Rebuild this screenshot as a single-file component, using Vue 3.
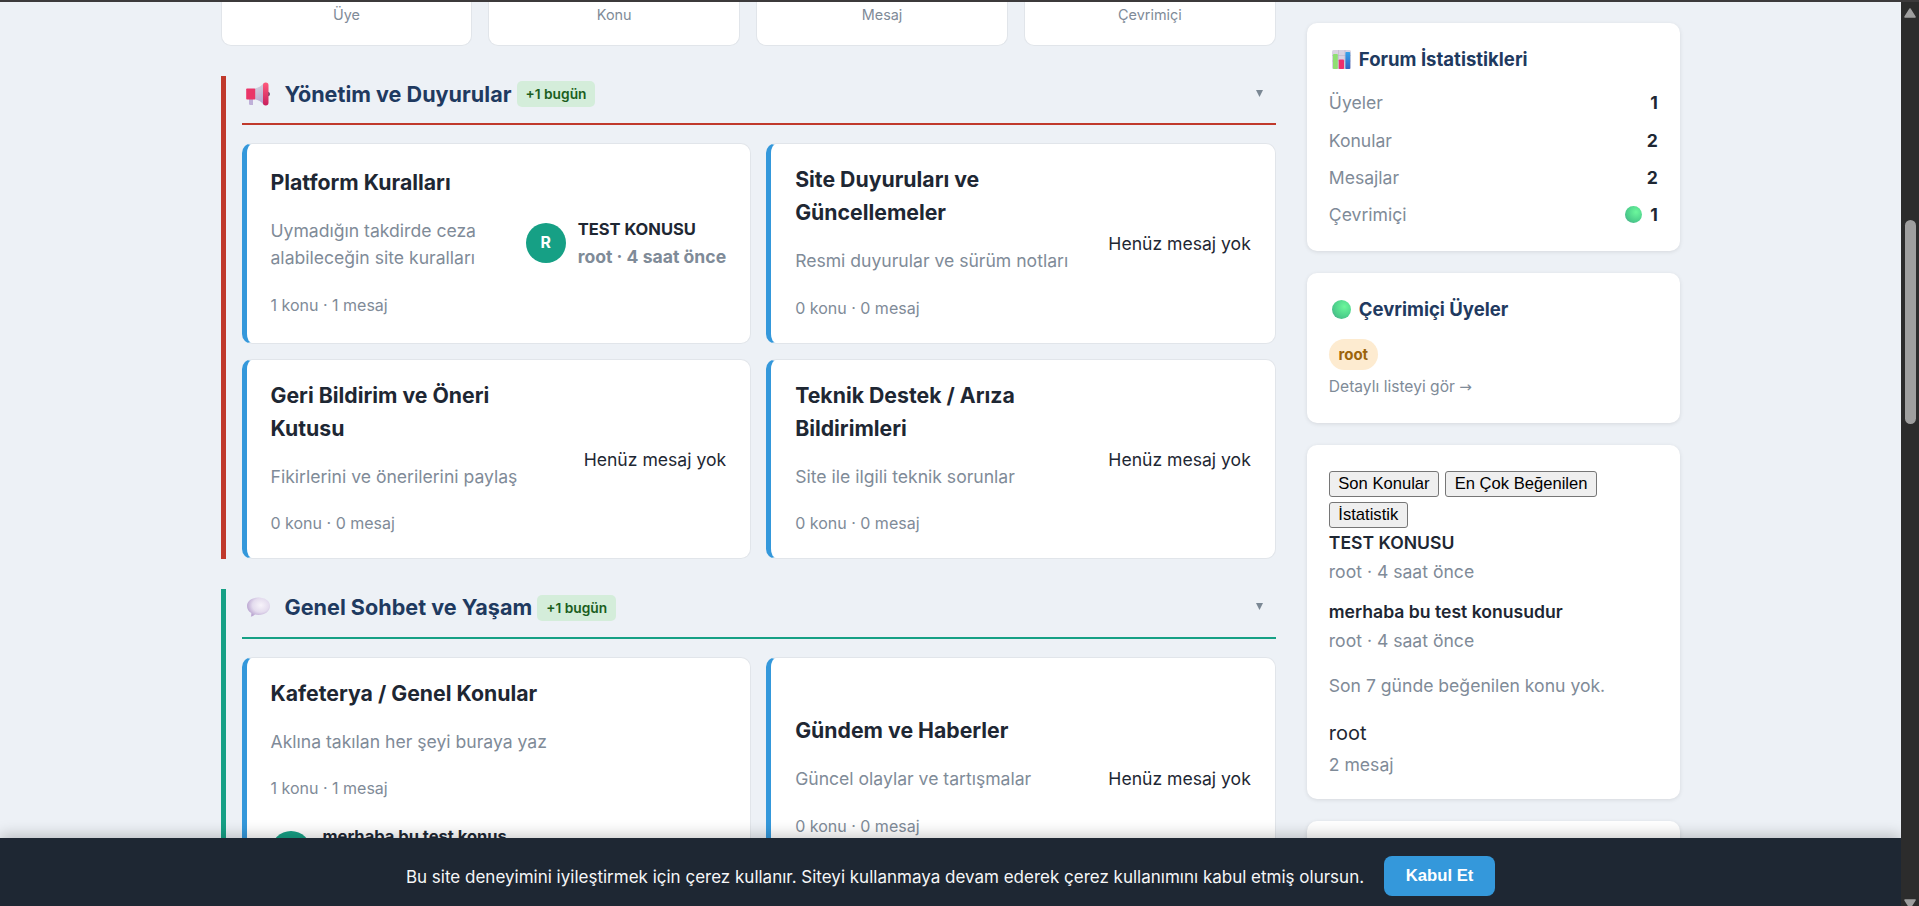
<template>
  <div class="viewport">
    <div class="page">
      <main class="main">
        <div class="stats">
          <div v-for="label in statLabels" :key="label" class="stat-box">{{ label }}</div>
        </div>

        <section v-for="category in categories" :key="category.title" class="category" :class="category.theme">
          <header class="category-header">
            <svg v-if="category.icon === 'megaphone'" class="category-icon" viewBox="0 0 24 24">
              <defs>
                <linearGradient id="horn" x1="0" y1="0" x2="0.3" y2="1">
                  <stop offset="0" stop-color="#d8dade" />
                  <stop offset="1" stop-color="#b9a8d2" />
                </linearGradient>
                <linearGradient id="rim" x1="0" y1="0" x2="0" y2="1">
                  <stop offset="0" stop-color="#ff5a7c" />
                  <stop offset="1" stop-color="#c81f5c" />
                </linearGradient>
              </defs>
              <path d="M3 16h4v7H4.200q-1.200 0-1.200-1.200z" fill="#bfb0d8" />
              <path d="M8.500 6.500Q14 5.500 18 1v22q-4-5-9.500-5.800z" fill="url(#horn)" />
              <path d="M21.500 9.500q2.500.5 2.500 2.500t-2.500 2.500z" fill="#5d4a66" />
              <rect x="0.200" y="6.500" width="9" height="11" rx="0.800" fill="#ea3568" />
              <rect x="17" y="0.500" width="5.500" height="23" rx="2.700" fill="url(#rim)" />
            </svg>
            <svg v-else class="category-icon" viewBox="0 0 24 24">
              <defs>
                <radialGradient id="bubble" cx="0.600" cy="0.400" r="0.600">
                  <stop offset="0" stop-color="#f7f3fa" />
                  <stop offset="0.600" stop-color="#e4dcee" />
                  <stop offset="1" stop-color="#bda9d3" />
                </radialGradient>
              </defs>
              <path
                d="M12.500 1.500C19 1.500 24 5 24 10s-5 9-11.500 9q-2 0-3.500-.4-2 1.900-4.200 2.200Q5.400 19.500 5.300 17 1 14.500 1 10c0-5 5-8.500 11.500-8.500z"
                fill="url(#bubble)"
              />
            </svg>
            <h2>{{ category.title }}</h2>
            <span class="today">+1 bugün</span>
            <svg class="toggle" viewBox="0 0 7 7"><path d="M0 0h7L3.500 7z" fill="#7b8894" /></svg>
          </header>

          <div class="forums">
            <article v-for="forum in category.forums" :key="forum.title" class="forum" :class="{ stacked: forum.stacked }">
              <div class="forum-info">
                <h3>{{ forum.title }}</h3>
                <p>{{ forum.description }}</p>
                <div class="forum-counts">{{ forum.count }} konu · {{ forum.count }} mesaj</div>
              </div>
              <div v-if="forum.last" class="last-post">
                <span class="avatar">{{ forum.initial }}</span>
                <div class="last-text">
                  <div class="last-title">{{ forum.last }}</div>
                  <div v-if="forum.meta" class="last-meta">{{ forum.meta }}</div>
                </div>
              </div>
              <div v-else class="no-post">Henüz mesaj yok</div>
            </article>
          </div>
        </section>
      </main>

      <aside class="sidebar">
        <div class="widget">
          <h4>
            <svg class="widget-icon" viewBox="0 0 19 19">
              <defs>
                <linearGradient id="barBlue" x1="0" y1="0" x2="0" y2="1">
                  <stop offset="0" stop-color="#35a3ea" />
                  <stop offset="1" stop-color="#3464c4" />
                </linearGradient>
              </defs>
              <rect width="19" height="19" rx="1.500" fill="#d9d3e2" />
              <path d="M0 5.500h19M0 11h19M6.500 0v19M13 0v19" stroke="#bcb3ca" stroke-width="0.600" />
              <rect x="1" y="4" width="4.800" height="15" rx="0.800" fill="#8fdf72" />
              <rect x="6.800" y="9.500" width="5.200" height="9.500" rx="0.800" fill="#ee2f6d" />
              <rect x="13.400" y="2" width="4.800" height="17" rx="0.800" fill="url(#barBlue)" />
            </svg>
            Forum İstatistikleri
          </h4>
          <div v-for="row in totals" :key="row.label" class="total-row">
            <span>{{ row.label }}</span>
            <strong><i v-if="row.online" class="dot"></i>{{ row.value }}</strong>
          </div>
        </div>

        <div class="widget online">
          <h4><i class="dot widget-icon"></i>Çevrimiçi Üyeler</h4>
          <span class="member">root</span>
          <a class="more">Detaylı listeyi gör <span>→</span></a>
        </div>

        <div class="widget activity">
          <div class="tabs">
            <button type="button">Son Konular</button>
            <button type="button">En Çok Beğenilen</button>
            <button type="button">İstatistik</button>
          </div>
          <div v-for="topic in recentTopics" :key="topic" class="topic">
            <div class="topic-title">{{ topic }}</div>
            <div class="topic-meta">root · 4 saat önce</div>
          </div>
          <p class="empty">Son 7 günde beğenilen konu yok.</p>
          <div class="top-user">root</div>
          <div class="top-count">2 mesaj</div>
        </div>

        <div class="widget next"></div>
      </aside>
    </div>

    <div class="cookie-bar">
      <span>Bu site deneyimini iyileştirmek için çerez kullanır. Siteyi kullanmaya devam ederek çerez kullanımını kabul etmiş olursun.</span>
      <button type="button">Kabul Et</button>
    </div>

    <div class="scrollbar">
      <svg class="arrow-up" viewBox="0 0 12 10"><path d="M6 1 11 9H1z" fill="#9f9f9f" stroke="#9f9f9f" stroke-linejoin="round" stroke-width="1.500" /></svg>
      <div class="thumb"></div>
      <svg class="arrow-down" viewBox="0 0 12 10"><path d="M6 9 11 1H1z" fill="#9f9f9f" stroke="#9f9f9f" stroke-linejoin="round" stroke-width="1.500" /></svg>
    </div>
    <div class="top-edge"></div>
  </div>
</template>

<script setup>
import { ref } from 'vue';

const statLabels = ['Üye', 'Konu', 'Mesaj', 'Çevrimiçi'];

const categories = ref([
  {
    title: 'Yönetim ve Duyurular',
    icon: 'megaphone',
    theme: 'red',
    forums: [
      {
        title: 'Platform Kuralları',
        description: 'Uymadığın takdirde ceza alabileceğin site kuralları',
        count: 1,
        initial: 'R',
        last: 'TEST KONUSU',
        meta: 'root · 4 saat önce',
      },
      { title: 'Site Duyuruları ve Güncellemeler', description: 'Resmi duyurular ve sürüm notları', count: 0 },
      { title: 'Geri Bildirim ve Öneri Kutusu', description: 'Fikirlerini ve önerilerini paylaş', count: 0 },
      { title: 'Teknik Destek / Arıza Bildirimleri', description: 'Site ile ilgili teknik sorunlar', count: 0 },
    ],
  },
  {
    title: 'Genel Sohbet ve Yaşam',
    icon: 'bubble',
    theme: 'green',
    forums: [
      { title: 'Kafeterya / Genel Konular', description: 'Aklına takılan her şeyi buraya yaz', count: 1, last: 'merhaba bu test konus', stacked: true },
      { title: 'Gündem ve Haberler', description: 'Güncel olaylar ve tartışmalar', count: 0 },
    ],
  },
]);

const totals = [
  { label: 'Üyeler', value: 1 },
  { label: 'Konular', value: 2 },
  { label: 'Mesajlar', value: 2 },
  { label: 'Çevrimiçi', value: 1, online: true },
];

const recentTopics = ['TEST KONUSU', 'merhaba bu test konusudur'];
</script>

<style>
body {
  margin: 0;
  overflow: hidden;
}
</style>

<style scoped>
.viewport {
  position: relative;
  height: 906px;
  overflow: hidden;
  box-sizing: border-box;
  padding-right: 18px;
  background: #edf1f6;
  color: #1e2733;
  font-family: Inter, 'Liberation Sans', sans-serif;
  font-size: 17.58px;
  line-height: 27.1px;
}

.page {
  display: grid;
  grid-template-columns: 1055.3px 373px;
  gap: 31px;
  width: 1460px;
  margin: 0 auto;
}

.stats {
  display: grid;
  grid-template-columns: repeat(4, 1fr);
  gap: 16px;
  height: 45.7px;
}

.stat-box {
  padding-top: 3.5px;
  box-sizing: border-box;
  border: 1px solid #e1e5ea;
  border-top: none;
  border-radius: 0 0 10px 10px;
  background: #fff;
  color: #7f8b98;
  font-size: 14.4px;
  line-height: 22.3px;
  text-align: center;
}

.category {
  margin-top: 30px;
  padding-left: 16px;
  border-left: 5px solid;
}

.red,
.red .category-header {
  border-color: #c0392b;
}

.green,
.green .category-header {
  border-color: #16a085;
}

.category-header {
  display: flex;
  align-items: center;
  box-sizing: border-box;
  height: 49.4px;
  padding: 1px 13px 11px 4px;
  border-bottom: 2px solid;
}

.category-icon {
  width: 24px;
  height: 24px;
  margin-right: 15px;
}

h2 {
  margin: 0;
  color: #1f3a60;
  font-size: 21.6px;
  font-weight: 700;
  line-height: 33px;
}

.today {
  margin-left: 5px;
  padding: 2px 9px;
  border-radius: 5px;
  background: #d4edda;
  color: #1b5e20;
  font-size: 13.75px;
  font-weight: 600;
  line-height: 22px;
}

.toggle {
  width: 7px;
  height: 7px;
  margin: 0 0 2px auto;
}

.forums {
  display: grid;
  grid-template-columns: 1fr 1fr;
  gap: 15.5px 15px;
  margin-top: 18.3px;
}

.forum {
  display: flex;
  align-items: center;
  gap: 24px;
  box-sizing: border-box;
  min-height: 200.2px;
  padding: 18.6px 24px;
  border: 1px solid #e1e5ea;
  border-left: 5px solid #3498db;
  border-radius: 10px;
  background: #fff;
}

.forum-info {
  flex: 1;
  min-width: 0;
}

h3 {
  margin: 0;
  font-size: 21.25px;
  font-weight: 700;
  line-height: 32.8px;
}

.forum p {
  margin: 18.3px 0 17.9px;
  color: #7f8b98;
}

.forum-counts {
  padding: 3.6px 0;
  color: #7f8b98;
  font-size: 16px;
  line-height: 24.8px;
}

.last-post {
  display: flex;
  align-items: center;
  gap: 12px;
}

.avatar {
  width: 40px;
  height: 40px;
  border-radius: 50%;
  background: #16a085;
  color: #fff;
  font-size: 15.8px;
  font-weight: 700;
  line-height: 40px;
  text-align: center;
}

.last-text {
  min-height: 55px;
}

.last-title,
.last-meta {
  font-size: 16.5px;
  font-weight: 700;
  line-height: 27.5px;
  white-space: nowrap;
}

.last-meta {
  color: #7f8b98;
  font-size: 17.6px;
}

.stacked {
  flex-direction: column;
  align-items: flex-start;
  gap: 18.5px;
  padding-bottom: 20.5px;
}

.stacked .forum-info {
  flex: none;
}

.widget {
  box-sizing: border-box;
  margin-bottom: 22px;
  padding: 22px;
  border-radius: 10px;
  background: #fff;
  box-shadow: 0 1px 4px rgba(0, 0, 0, 0.1);
}

.widget:first-child {
  height: 228.3px;
  margin-top: 22.7px;
}

h4 {
  display: flex;
  align-items: center;
  margin: 0 0 15.8px;
  color: #1f3a60;
  font-size: 18.55px;
  font-weight: 700;
  line-height: 29px;
}

.widget-icon {
  width: 19px;
  height: 19px;
  margin: 0 8px 0 3px;
}

.total-row {
  display: flex;
  justify-content: space-between;
  margin-bottom: 10.2px;
  color: #7f8b98;
}

.total-row strong {
  display: flex;
  align-items: center;
  gap: 8px;
  color: #1e2733;
  font-weight: 700;
}

.dot {
  width: 17px;
  height: 17px;
  border-radius: 50%;
  background: radial-gradient(circle at 65% 35%, #6cf79c, #4cce8b 60%, #4a9c8c);
}

h4 .dot {
  width: 19px;
  height: 19px;
}

.online {
  height: 150.3px;
}

.online h4 {
  margin-bottom: 15px;
}

.member {
  display: block;
  width: 49px;
  border-radius: 15.5px;
  background: #fdebd0;
  color: #9c640c;
  font-size: 15px;
  font-weight: 700;
  line-height: 31px;
  text-align: center;
}

.more {
  display: block;
  margin-top: 4.6px;
  color: #7f8b98;
  font-size: 15.6px;
  line-height: 24px;
}

.more span {
  font-family: 'DejaVu Sans', sans-serif;
  font-size: 15px;
  line-height: 1;
}

.activity {
  height: 354px;
  padding-top: 26px;
}

.tabs {
  display: flex;
  flex-wrap: wrap;
  gap: 5px 6px;
}

.tabs button {
  box-sizing: border-box;
  height: 26px;
  padding: 0 8.5px;
  border: 1px solid #767676;
  border-radius: 3px;
  background: #efefef;
  color: #000;
  font-family: 'Liberation Sans', sans-serif;
  font-size: 16.6px;
  line-height: 22px;
}

.topic {
  margin-bottom: 10.7px;
}

.topic-title {
  font-weight: 600;
  line-height: 29px;
}

.topic-meta {
  color: #7f8b98;
  line-height: 29.4px;
}

.empty {
  margin: 16.6px 0 18.2px;
  color: #7f8b98;
}

.top-user {
  font-size: 20px;
  line-height: 31px;
}

.top-count {
  margin-top: 2px;
  color: #7f8b98;
}

.next {
  height: 200px;
}

.cookie-bar {
  position: absolute;
  right: 18px;
  bottom: 0;
  left: 0;
  display: flex;
  align-items: center;
  justify-content: center;
  gap: 20px;
  box-sizing: border-box;
  height: 68px;
  padding-top: 8px;
  background: #1e2733;
  box-shadow: 0 -3px 14px rgba(0, 0, 0, 0.22);
  color: #f5f6f7;
  font-size: 17px;
  line-height: 26px;
}

.cookie-bar span {
  padding-top: 1px;
}

.cookie-bar button {
  width: 111px;
  height: 40px;
  border: none;
  border-radius: 8px;
  background: #3498db;
  color: #fff;
  font-family: 'Liberation Sans', sans-serif;
  font-size: 16.67px;
  font-weight: 700;
}

.scrollbar {
  position: absolute;
  top: 0;
  right: 0;
  display: flex;
  flex-direction: column;
  align-items: center;
  width: 18px;
  height: 906px;
  background: #2c2c2c;
}

.arrow-up {
  flex: none;
  width: 12px;
  height: 10px;
  margin-top: 8px;
}

.thumb {
  flex: none;
  width: 11px;
  height: 204px;
  margin-top: 202px;
  border-radius: 6px;
  background: #9f9f9f;
}

.arrow-down {
  flex: none;
  width: 12px;
  height: 10px;
  margin-top: 475px;
}

.top-edge {
  position: absolute;
  top: 0;
  right: 0;
  left: 0;
  height: 2px;
  background: #3c3a3b;
}
</style>
